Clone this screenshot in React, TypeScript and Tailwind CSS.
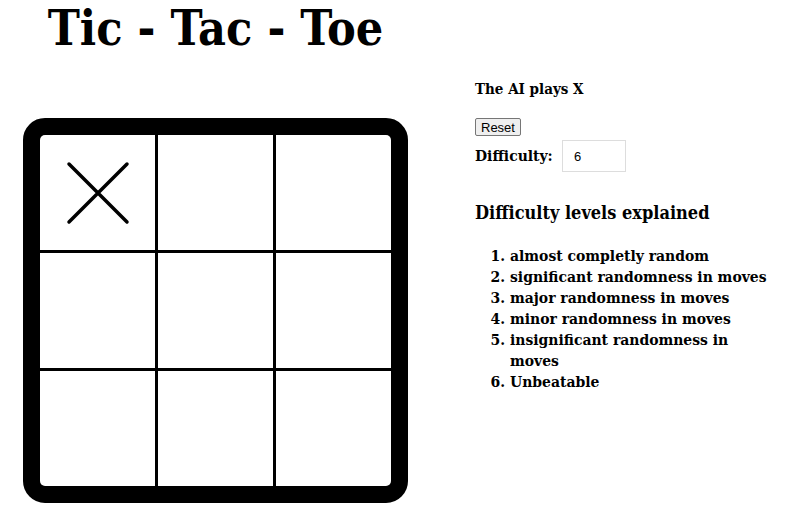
const serif = { fontFamily: '"DejaVu Serif Condensed", "DejaVu Serif", serif' };

const Cell = ({ mark }: { mark?: 'X' | 'O' }) => (
    <div className="bg-white flex items-center justify-center">
        {mark === 'X' && (
            <svg width="64" height="64" viewBox="0 0 64 64">
                <path d="M3 3 L61 61 M61 3 L3 61" stroke="black" strokeWidth="3.5" strokeLinecap="round" />
            </svg>
        )}
    </div>
);

const levels = [
    'almost completly random',
    'significant randomness in moves',
    'major randomness in moves',
    'minor randomness in moves',
    'insignificant randomness in moves',
    'Unbeatable',
];

export default function App() {
    const board: ('X' | undefined)[] = ['X', undefined, undefined, undefined, undefined, undefined, undefined, undefined, undefined];

    return (
        <div className="flex bg-white text-black w-[800px] h-[513px] overflow-hidden" style={serif}>
            <div className="flex flex-col w-[408px] pl-[23px]">
                <h1 className="text-center text-[48px] font-bold leading-[56px] h-[118px]">
                    Tic - Tac - Toe
                </h1>
                <div className="w-[385px] h-[385px] border-[17px] border-black rounded-[22px] bg-black grid grid-cols-3 grid-rows-3 gap-[3px] overflow-hidden">
                    {board.map((m, i) => (
                        <Cell key={i} mark={m} />
                    ))}
                </div>
            </div>

            <div className="ml-[67px] pt-[79px] w-[300px]">
                <p className="font-bold text-[15px] leading-[20px]">The AI plays X</p>
                <button
                    className="mt-[19px] block h-[18px] px-[5px] bg-[#efefef] border border-[#767676] rounded-[2px] text-[13px] leading-[15px] text-black"
                    style={{ fontFamily: '"Liberation Sans", Arial, sans-serif' }}
                >
                    Reset
                </button>
                <div className="flex items-center mt-[4px]">
                    <label className="font-bold text-[15.5px] w-[87px]">Difficulty:</label>
                    <input
                        className="w-[64px] h-[32px] border border-[#dddddd] px-[11px] text-[13px] outline-none"
                        style={{ fontFamily: '"Liberation Sans", Arial, sans-serif' }}
                        defaultValue="6"
                    />
                </div>
                <h2 className="font-bold text-[18px] leading-[24px] mt-[29px]">Difficulty levels explained</h2>
                <ol className="list-decimal pl-[35px] mt-[20px] text-[15.5px] leading-[21px] font-bold w-[300px]">
                    {levels.map((l) => (
                        <li key={l}>{l}</li>
                    ))}
                </ol>
            </div>
        </div>
    );
}
